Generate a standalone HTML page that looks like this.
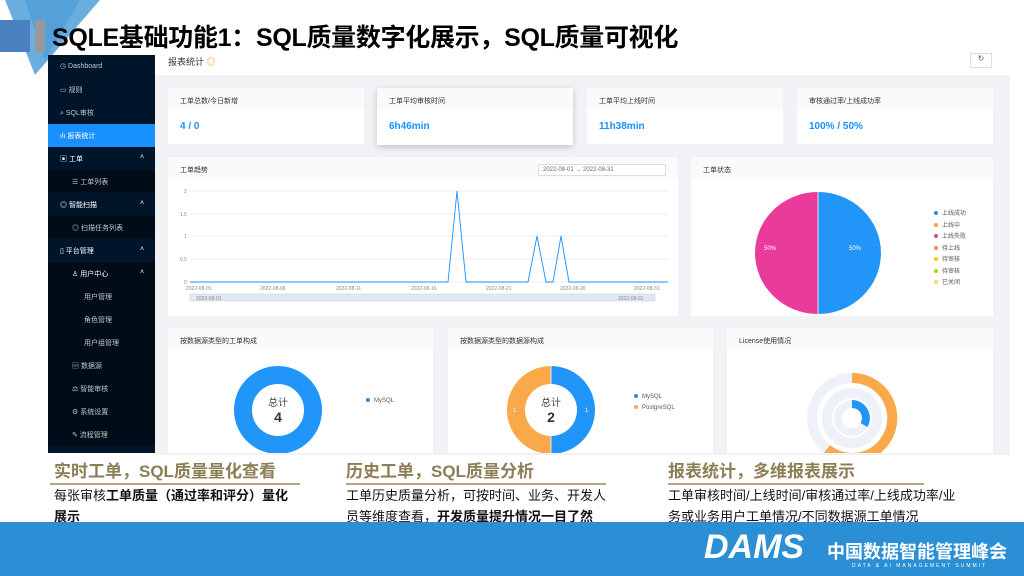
<!DOCTYPE html><html><head><meta charset="utf-8"><style>
*{margin:0;padding:0;box-sizing:border-box}
body{width:1024px;height:576px;overflow:hidden;background:#fff;font-family:"Liberation Sans","Noto Sans CJK SC",sans-serif;position:relative}
.a{position:absolute}
.card{position:absolute;background:#fff}
.ch{position:absolute;left:0;right:0;top:0;height:22px;background:#fafafa;font-size:7px;color:#333;padding:8px 12px}
.sb div{position:absolute;left:0;width:107px;height:23px;font-size:7px;color:#bfc6d0;padding:7px 0 0 12px}
.cap{position:absolute;font-size:17px;font-weight:bold;color:#8c7e55}
.ln{position:absolute;height:2px;background:#b5a57a}
.tx{position:absolute;font-size:13px;color:#111;line-height:21px}
</style></head><body>
<svg class="a" style="left:0;top:0" width="110" height="80"><polygon points="5,0 100,0 35,75" fill="#6aaee0"/><polygon points="25,0 80,0 45,60" fill="#4c9ad6" opacity=".7"/><rect x="0" y="20" width="30" height="32" fill="#4a7fc0"/><rect x="35" y="20" width="10" height="32" fill="#999"/></svg>
<div class="a" style="left:52px;top:18px;font-size:25px;font-weight:bold;color:#000;letter-spacing:-0.3px">SQLE基础功能1：SQL质量数字化展示，SQL质量可视化</div>
<div class="a sb" style="left:48px;top:55px;width:107px;height:398px;background:#001529">
<div style="top:0px">◷ Dashboard</div><div style="top:23px">▭ 规则</div><div style="top:46px">⌕ SQL审核</div>
<div style="top:69px;background:#1890ff;color:#fff">ılı 报表统计</div>
<div style="top:92px;color:#fff">▣ 工单<span style="position:absolute;left:92px">˄</span></div>
<div style="top:115px;background:#000c17;padding-left:24px">☰ 工单列表</div>
<div style="top:138px;color:#fff">◎ 智能扫描<span style="position:absolute;left:92px">˄</span></div>
<div style="top:161px;background:#000c17;padding-left:24px">◎ 扫描任务列表</div>
<div style="top:184px;color:#fff">▯ 平台管理<span style="position:absolute;left:92px">˄</span></div>
<div style="top:207px;background:#000c17;padding-left:24px;color:#fff">♙ 用户中心<span style="position:absolute;left:92px">˄</span></div>
<div style="top:230px;background:#000c17;padding-left:36px">用户管理</div>
<div style="top:253px;background:#000c17;padding-left:36px">角色管理</div>
<div style="top:276px;background:#000c17;padding-left:36px">用户组管理</div>
<div style="top:299px;background:#000c17;padding-left:24px">▤ 数据源</div>
<div style="top:322px;background:#000c17;padding-left:24px">⚖ 智能审核</div>
<div style="top:345px;background:#000c17;padding-left:24px">⚙ 系统设置</div>
<div style="top:368px;background:#000c17;padding-left:24px">✎ 流程管理</div>
</div>
<div class="a" style="left:155px;top:52px;width:855px;height:403px;background:#f0f2f5"></div>
<div class="a" style="left:155px;top:52px;width:855px;height:23px;background:#fff"></div>
<div class="a" style="left:168px;top:55px;font-size:9px;color:#333">报表统计 <span style="color:#f5a623">◎</span></div>
<div class="a" style="left:970px;top:53px;width:22px;height:15px;border:1px solid #ddd;font-size:8px;text-align:center;color:#555">↻</div>
<div class="card" style="left:168px;top:88px;width:196px;height:56px"><div class="ch">工单总数/今日新增</div><div class="a" style="left:12px;top:33px;color:#1890ff;font-size:10px;font-weight:bold">4 / 0</div></div>
<div class="card" style="left:377px;top:88px;width:196px;height:57px;box-shadow:0 2px 6px rgba(0,0,0,.2)"><div class="ch">工单平均审核时间</div><div class="a" style="left:12px;top:33px;color:#1890ff;font-size:10px;font-weight:bold">6h46min</div></div>
<div class="card" style="left:587px;top:88px;width:196px;height:56px"><div class="ch">工单平均上线时间</div><div class="a" style="left:12px;top:33px;color:#1890ff;font-size:10px;font-weight:bold">11h38min</div></div>
<div class="card" style="left:797px;top:88px;width:196px;height:56px"><div class="ch">审核通过率/上线成功率</div><div class="a" style="left:12px;top:33px;color:#1890ff;font-size:10px;font-weight:bold">100% / 50%</div></div>
<div class="card" style="left:168px;top:157px;width:510px;height:159px"><div class="ch">工单趋势</div>
<div class="a" style="left:370px;top:7px;width:128px;height:12px;border:1px solid #ddd;background:#fff;font-size:6px;color:#666;padding:2px 4px">2022-08-01 → 2022-08-31</div>
<svg class="a" style="left:0;top:22px" width="510" height="137" font-size="5" fill="#888" font-family="Liberation Sans">
<g stroke="#e6e6e6" stroke-width=".7"><line x1="22" y1="12" x2="500" y2="12"/><line x1="22" y1="35" x2="500" y2="35"/><line x1="22" y1="57" x2="500" y2="57"/><line x1="22" y1="80" x2="500" y2="80"/><line x1="22" y1="103" x2="500" y2="103"/></g>
<text x="16" y="14">2</text><text x="12" y="37">1.5</text><text x="16" y="59">1</text><text x="12" y="82">0.5</text><text x="16" y="105">0</text>
<polyline fill="none" stroke="#1890ff" stroke-width=".9" points="22,103 280,103 289,12 298,103 360,103 369,57 378,103 385,103 393,57 401,103 500,103"/>
<text x="18" y="111">2022-08-01</text><text x="92" y="111">2022-08-06</text><text x="168" y="111">2022-08-11</text><text x="243" y="111">2022-08-16</text><text x="318" y="111">2022-08-21</text><text x="392" y="111">2022-08-26</text><text x="466" y="111">2022-08-31</text>
<rect x="22" y="115" width="465" height="7" fill="#dfe8f7" stroke="#ccc" stroke-width=".5"/><text x="28" y="121">2022-08-01</text><text x="450" y="121">2022-08-31</text>
</svg></div>
<div class="card" style="left:691px;top:157px;width:302px;height:159px"><div class="ch">工单状态</div>
<svg class="a" style="left:0;top:0" width="302" height="159" font-size="6" font-family="Liberation Sans">
<path d="M127,35 A63,61 0 0 0 127,157 Z" fill="#ea3a9a"/>
<path d="M127,35 A63,61 0 0 1 127,157 Z" fill="#2196f8"/>
<line x1="127" y1="35" x2="127" y2="157" stroke="#fff" stroke-width=".8"/>
<text x="158" y="93" fill="#fff">50%</text><text x="73" y="93" fill="#fff">50%</text>
<g fill="#555"><circle cx="245" cy="56" r="2" fill="#1890ff"/><text x="251" y="58">上线成功</text>
<circle cx="245" cy="68" r="2" fill="#f5a040"/><text x="251" y="70">上线中</text>
<circle cx="245" cy="79" r="2" fill="#ea3a9a"/><text x="251" y="81">上线失败</text>
<circle cx="245" cy="91" r="2" fill="#f48a60"/><text x="251" y="93">待上线</text>
<circle cx="245" cy="102" r="2" fill="#f7d000"/><text x="251" y="104">待审核</text>
<circle cx="245" cy="114" r="2" fill="#a0d911"/><text x="251" y="116">待审核</text>
<circle cx="245" cy="125" r="2" fill="#ffd666"/><text x="251" y="127">已关闭</text></g>
</svg></div>
<div class="card" style="left:168px;top:328px;width:265px;height:125px;overflow:hidden"><div class="ch">按数据源类型的工单构成</div>
<svg class="a" style="left:0;top:22px" width="265" height="103" font-family="Liberation Sans">
<circle cx="110" cy="60" r="35" fill="none" stroke="#2196f8" stroke-width="18"/>
<text x="110" y="56" font-size="10" fill="#444" text-anchor="middle" font-family="Noto Sans CJK SC">总计</text>
<text x="110" y="72" font-size="14" font-weight="bold" fill="#333" text-anchor="middle">4</text>
<circle cx="200" cy="50" r="2" fill="#1890ff"/><text x="206" y="52" font-size="6" fill="#555">MySQL</text></svg></div>
<div class="card" style="left:448px;top:328px;width:265px;height:125px;overflow:hidden"><div class="ch">按数据源类型的数据源构成</div>
<svg class="a" style="left:0;top:22px" width="265" height="103" font-family="Liberation Sans">
<path d="M103,16 A44,44 0 0 1 103,104 L103,86 A26,26 0 0 0 103,34Z" fill="#2196f8"/>
<path d="M103,16 A44,44 0 0 0 103,104 L103,86 A26,26 0 0 1 103,34Z" fill="#f9a94a"/>
<line x1="103" y1="16" x2="103" y2="104" stroke="#fff" stroke-width=".8"/>
<text x="103" y="56" font-size="10" fill="#444" text-anchor="middle" font-family="Noto Sans CJK SC">总计</text>
<text x="103" y="72" font-size="14" font-weight="bold" fill="#333" text-anchor="middle">2</text>
<text x="65" y="62" font-size="6" fill="#fff">1</text><text x="137" y="62" font-size="6" fill="#fff">1</text>
<circle cx="188" cy="46" r="2" fill="#1890ff"/><text x="194" y="48" font-size="6" fill="#555">MySQL</text>
<circle cx="188" cy="57" r="2" fill="#f9a94a"/><text x="194" y="59" font-size="6" fill="#555">PostgreSQL</text></svg></div>
<div class="card" style="left:727px;top:328px;width:266px;height:125px;overflow:hidden"><div class="ch">License使用情况</div>
<svg class="a" style="left:0;top:22px" width="266" height="103">
<circle cx="125" cy="68" r="40" fill="none" stroke="#eef2f8" stroke-width="10"/>
<circle cx="125" cy="68" r="25" fill="none" stroke="#eef2f8" stroke-width="10"/>
<circle cx="125" cy="68" r="14" fill="none" stroke="#eef2f8" stroke-width="8"/>
<path d="M125,28 A40,40 0 1 1 100,99" fill="none" stroke="#f9a94a" stroke-width="10"/>
<path d="M125,54 A14,14 0 0 1 137,75" fill="none" stroke="#2196f8" stroke-width="8"/>
</svg></div>
<div class="cap" style="left:54px;top:457px">实时工单，SQL质量量化查看</div><div class="ln" style="left:50px;top:483px;width:250px"></div>
<div class="tx" style="left:54px;top:485px">每张审核<b>工单质量（通过率和评分）量化<br>展示</b></div>
<div class="cap" style="left:346px;top:457px">历史工单，SQL质量分析</div><div class="ln" style="left:346px;top:483px;width:260px"></div>
<div class="tx" style="left:346px;top:485px">工单历史质量分析，可按时间、业务、开发人<br>员等维度查看，<b>开发质量提升情况一目了然</b></div>
<div class="cap" style="left:668px;top:457px">报表统计，多维报表展示</div><div class="ln" style="left:668px;top:483px;width:256px"></div>
<div class="tx" style="left:668px;top:485px">工单审核时间/上线时间/审核通过率/上线成功率/业<br>务或业务用户工单情况/不同数据源工单情况</div>
<div class="a" style="left:0;top:522px;width:1024px;height:54px;background:#2a8fd4"></div>
<div class="a" style="left:704px;top:528px;font-size:34px;font-weight:bold;font-style:italic;color:#fff">DAMS</div>
<div class="a" style="left:827px;top:538px;font-size:18px;font-weight:bold;color:#fff">中国数据智能管理峰会</div>
<div class="a" style="left:852px;top:563px;font-size:5px;color:#fff;letter-spacing:2px">DATA &amp; AI MANAGEMENT SUMMIT</div>
</body></html>
